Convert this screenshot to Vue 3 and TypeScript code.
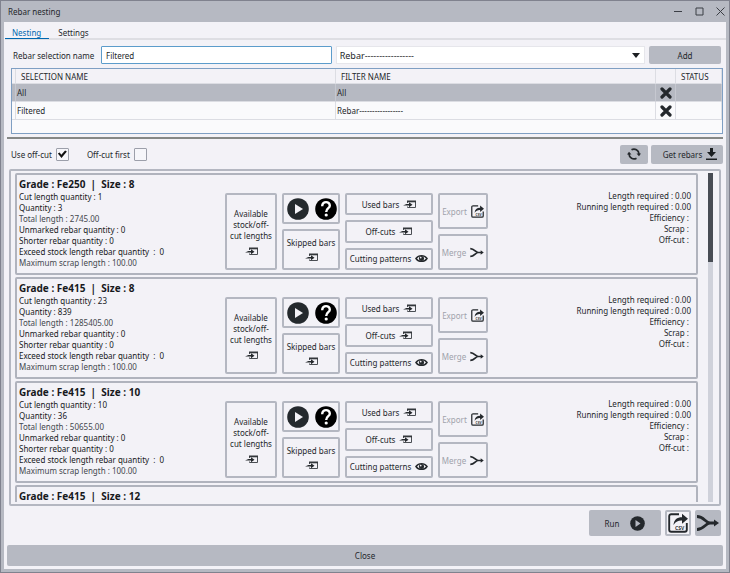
<script setup lang="ts">
import { ref } from 'vue'

interface RebarGroup {
  grade: string
  size: number
  cuts: number
  quantity: number
  total: string
}

const name = ref('Filtered')
const filter = ref('rebar')
const useOffcut = ref(true)
const offcutFirst = ref(false)

const selections = ref([
  { name: 'All', filter: 'All' },
  { name: 'Filtered', filter: 'Rebar-----------------' },
])
const selected = ref(0)

const groups: RebarGroup[] = [
  { grade: 'Fe250', size: 8, cuts: 1, quantity: 3, total: '2745.00' },
  { grade: 'Fe415', size: 8, cuts: 23, quantity: 839, total: '1285405.00' },
  { grade: 'Fe415', size: 10, cuts: 10, quantity: 36, total: '50655.00' },
]
</script>

<template>
  <svg class="defs" aria-hidden="true">
    <symbol id="i-open" viewBox="0 0 13 9">
      <path d="M4.500 3V1.500h8v6h-8V6.500" fill="none" stroke="#4a4e53" stroke-width="1" />
      <path d="M4 .5h9v1.800H4z" fill="#33373b" />
      <path d="M0 5.600 3.500 4H6V2.300L9.500 4.800 6 7.300V5.600z" fill="#24282c" />
    </symbol>
    <symbol id="i-eye" viewBox="0 0 14 9">
      <path d="M1 4.500C4 .3 10 .3 13 4.500 10 8.700 4 8.700 1 4.500z" fill="none" stroke="#24282c" stroke-width="1.500" />
      <circle cx="7" cy="4.500" r="2.700" fill="#24282c" />
      <circle cx="6.200" cy="3.500" r=".9" fill="#f3f2f7" />
    </symbol>
    <symbol id="i-merge" viewBox="0 0 22 18">
      <path d="M0 2.500C7 2.500 8.500 9 13 9 8.500 9 7 15.500 0 15.500M12 9h7" fill="none" stroke="#24282c" stroke-width="2.800" />
      <path d="M17 5.500l5 3.500-5 3.500z" fill="#24282c" />
    </symbol>
    <symbol id="i-play" viewBox="0 0 22 22">
      <circle cx="11" cy="11" r="10.800" fill="#24292d" />
      <path d="M8 6 16 11 8 16z" fill="#f3f2f7" />
    </symbol>
    <symbol id="i-help" viewBox="0 0 22 22">
      <circle cx="11" cy="11" r="10.800" fill="#000" />
      <path d="M7.200 8.200C7 2.800 15 2.800 14.800 7.800 14.700 10.300 11.200 10.300 11.200 14" fill="none" stroke="#fff" stroke-width="2.400" />
      <circle cx="11.200" cy="17" r="1.600" fill="#fff" />
    </symbol>
    <symbol id="i-share" viewBox="0 0 20 20">
      <path d="M11 1.200H3.200a2 2 0 0 0-2 2v13.600a2 2 0 0 0 2 2h13.600a2 2 0 0 0 2-2V10" fill="none" stroke="#24282c" stroke-width="1.900" />
      <path d="M5.500 12C6 6.500 9 4.200 14 4.200V.8l6 5-6 5V7.600C10.500 7.400 8 8.500 5.500 12z" fill="#24282c" />
    </symbol>
    <symbol id="i-cross" viewBox="0 0 12 12">
      <path d="M2 2l8 8M10 2l-8 8" stroke="#24282c" stroke-width="3.200" stroke-linecap="round" />
    </symbol>
  </svg>

  <main class="window">
    <header class="titlebar">
      <h1>Rebar nesting</h1>
      <div class="controls">
        <button aria-label="Minimize"><svg width="9" height="9"><path d="M0 4.500h8" /></svg></button>
        <button aria-label="Maximize"><svg width="9" height="9"><path d="M1 1h7v7H1z" /></svg></button>
        <button aria-label="Close window"><svg width="9" height="9"><path d="M.5.5l8 8M8.500.5l-8 8" /></svg></button>
      </div>
    </header>

    <div class="body">
      <nav class="tabs">
        <a href="#nesting" class="active">Nesting</a>
        <a href="#settings">Settings</a>
      </nav>

      <form class="selector" @submit.prevent>
        <label for="sel-name">Rebar selection name</label>
        <input id="sel-name" v-model="name" class="name" type="text" />
        <div class="combo">
          <select v-model="filter" aria-label="Filter">
            <option value="rebar">Rebar-----------------</option>
          </select>
          <svg width="8" height="5"><path d="M0 0h8L4 5z" fill="#1c1f22" /></svg>
        </div>
        <button class="solid add">Add</button>
      </form>

      <div class="grid">
        <table>
          <colgroup>
            <col class="c-mark" /><col /><col /><col class="c-del" /><col class="c-status" />
          </colgroup>
          <thead>
            <tr><th></th><th>SELECTION NAME</th><th>FILTER NAME</th><th></th><th>STATUS</th></tr>
          </thead>
          <tbody>
            <tr v-for="(s, i) in selections" :key="s.name" :class="{ picked: i === selected }" @click="selected = i">
              <td></td>
              <td>{{ s.name }}</td>
              <td>{{ s.filter }}</td>
              <td><button class="bare" aria-label="Delete"><svg width="12" height="12"><use href="#i-cross" /></svg></button></td>
              <td></td>
            </tr>
          </tbody>
        </table>
      </div>

      <hr />

      <div class="options">
        <label>Use off-cut <input v-model="useOffcut" type="checkbox" /></label>
        <label>Off-cut first <input v-model="offcutFirst" type="checkbox" /></label>
        <button class="solid refresh" aria-label="Refresh">
          <svg width="14" height="12" viewBox="0 0 14 12">
            <path d="M4.500 1.800A5 5 0 0 1 12 6M9.500 10.200A5 5 0 0 1 2 6" fill="none" stroke="#24282c" stroke-width="1.700" />
            <path d="M9.500 5.500H14L12 8.300zM0 6.500h4.500L2 3.700z" fill="#24282c" />
          </svg>
        </button>
        <button class="solid get">
          Get rebars
          <svg width="11" height="12" viewBox="0 0 11 12"><path d="M4 0h3v4h3L5.500 9 1 4h3zM0 10.500h11V12H0z" fill="#1c1f22" /></svg>
        </button>
      </div>

      <section class="frame">
        <div class="list">
          <article v-for="g in groups" :key="g.grade + g.size" class="card">
            <div class="info">
              <h2>Grade : {{ g.grade }}&nbsp; |&nbsp; Size : {{ g.size }}</h2>
              <p>Cut length quantity : {{ g.cuts }}</p>
              <p>Quantity : {{ g.quantity }}</p>
              <p class="soft">Total length : {{ g.total }}</p>
              <p>Unmarked rebar quantity : 0</p>
              <p>Shorter rebar quantity : 0</p>
              <p>Exceed stock length rebar quantity&nbsp; :&nbsp; 0</p>
              <p class="soft">Maximum scrap length : 100.00</p>
            </div>
            <div class="actions">
              <button class="line tall">
                <span>Available<br />stock/off-<br />cut lengths</span>
                <svg width="13" height="9"><use href="#i-open" /></svg>
              </button>
              <div class="stack mid">
                <div class="line pair">
                  <button class="bare" aria-label="Run"><svg width="22" height="22"><use href="#i-play" /></svg></button>
                  <button class="bare" aria-label="Help"><svg width="22" height="22"><use href="#i-help" /></svg></button>
                </div>
                <button class="line skipped">
                  <span>Skipped bars</span>
                  <svg width="13" height="9"><use href="#i-open" /></svg>
                </button>
              </div>
              <div class="stack wide">
                <button class="line">Used bars <svg width="13" height="9"><use href="#i-open" /></svg></button>
                <button class="line">Off-cuts <svg width="13" height="9"><use href="#i-open" /></svg></button>
                <button class="line">Cutting patterns <svg width="13" height="9"><use href="#i-eye" /></svg></button>
              </div>
              <div class="stack side">
                <button class="line" disabled>
                  Export
                  <svg width="13" height="13" viewBox="0 0 20 20"><use href="#i-share" /><text class="csv-text" x="7" y="16.500">CSV</text></svg>
                </button>
                <button class="line" disabled>Merge <svg width="14" height="11"><use href="#i-merge" /></svg></button>
              </div>
            </div>
            <div class="totals">
              <p>Length required : 0.00</p>
              <p>Running length required : 0.00</p>
              <p>Efficiency :&nbsp;</p>
              <p>Scrap :&nbsp;</p>
              <p>Off-cut :&nbsp;</p>
            </div>
          </article>
          <article class="card">
            <div class="info">
              <h2>Grade : Fe415&nbsp; |&nbsp; Size : 12</h2>
            </div>
          </article>
        </div>
        <div class="track"><div class="thumb"></div></div>
      </section>

      <div class="footer">
        <button class="solid run">Run <svg width="15" height="15" viewBox="0 0 15 15"><circle cx="7.500" cy="7.500" r="7.300" fill="#24282c" /><path d="M5.500 4 10.500 7.500l-5 3.500z" fill="#b6b9c2" /></svg></button>
        <button class="solid csv" aria-label="Export CSV">
          <svg width="20" height="20" viewBox="0 0 20 20"><use href="#i-share" /><text class="csv-text" x="7" y="16.500">CSV</text></svg>
        </button>
        <button class="solid mrg" aria-label="Merge"><svg width="22" height="18"><use href="#i-merge" /></svg></button>
      </div>

      <button class="solid close">Close</button>
    </div>
  </main>
</template>

<style>
body {
  margin: 0;
}
</style>

<style scoped>
* {
  box-sizing: border-box;
}
.defs {
  position: absolute;
  width: 0;
  height: 0;
}
.window {
  height: 100vh;
  display: flex;
  flex-direction: column;
  border: 1px solid #80828e;
  background: #b6b9c2;
  padding: 0 3px 3px;
  font-family: "Noto Sans", "Open Sans", sans-serif;
  font-size: 8px;
  line-height: 11px;
  color: #24272b;
}
button,
input,
select {
  font: inherit;
  color: inherit;
  margin: 0;
}
button {
  display: flex;
  align-items: center;
  justify-content: center;
  padding: 0;
  border: 0;
  white-space: nowrap;
}
svg {
  flex: none;
  display: block;
}
h1,
h2,
p {
  margin: 0;
}
.titlebar {
  height: 21px;
  flex: none;
  display: flex;
  align-items: center;
  justify-content: space-between;
  padding: 0 1px 0 4px;
}
h1 {
  font-size: 8px;
  font-weight: 400;
}
.controls {
  display: flex;
  gap: 12px;
}
.controls button {
  background: none;
}
.controls path {
  fill: none;
  stroke: #3b3e45;
  stroke-width: 1;
}
.body {
  flex: 1;
  min-height: 0;
  display: flex;
  flex-direction: column;
  background: #f3f2f7;
  padding: 0 3px 3px;
}
.tabs {
  display: flex;
  height: 18px;
  flex: none;
  margin: 0 -3px 0 -2px;
  border-bottom: 2px solid #dedee3;
}
.tabs a {
  height: 17px;
  padding: 5px 8px 0 9px;
  color: inherit;
  text-decoration: none;
}
.tabs .active {
  color: #0068b0;
  padding: 5px 8px 0 7px;
  border-bottom: 1px solid #0068b0;
}
.selector {
  display: flex;
  align-items: center;
  height: 18px;
  flex: none;
  margin: 6px 2px 0 6px;
}
.selector label {
  width: 88px;
  white-space: nowrap;
}
.name {
  flex: 227;
  min-width: 0;
  height: 18px;
  border: 1px solid #5c9ccb;
  border-radius: 1px;
  background: #fff;
  padding: 0 4px;
  outline: 0;
}
.combo {
  flex: 312;
  min-width: 0;
  height: 18px;
  display: flex;
  align-items: center;
  margin: 0 4px;
  padding-right: 4px;
  background: #fff;
  border: 1px solid #e6e6eb;
}
.combo select {
  flex: 1;
  min-width: 0;
  appearance: none;
  border: 0;
  background: none;
  padding: 0 3px;
  outline: 0;
  font-size: 9px;
}
.solid {
  background: #b6b9c2;
  border-radius: 2px;
}
.add {
  width: 72px;
  height: 18px;
}
.grid {
  height: 66px;
  flex: none;
  margin: 4px 0 0 4px;
  border: 1px solid #7f9fc3;
  background: #fafafc;
}
table {
  width: 100%;
  table-layout: fixed;
  border-collapse: separate;
  border-spacing: 0;
}
.c-mark {
  width: 4px;
}
.c-del {
  width: 20px;
}
.c-status {
  width: 46px;
}
th,
td {
  padding: 0 1px;
  text-align: left;
  font-weight: 400;
  border-right: 1px solid #dcdde3;
  border-bottom: 1px solid #dcdde3;
}
th {
  height: 15px;
  padding-left: 5px;
  background: #f3f2f7;
}
td {
  height: 18px;
}
td:first-child,
th:first-child {
  padding: 0;
}
td button {
  margin: 0 auto;
}
.picked td {
  background: #b6b9c2;
  border-right-color: #c6c8d0;
}
.bare {
  background: none;
}
hr {
  width: 100%;
  height: 2px;
  flex: none;
  margin: 3px 0 0;
  border: 0;
  background: #868886;
}
.options {
  display: flex;
  align-items: center;
  height: 20px;
  flex: none;
  margin: 5px 0 0 4px;
}
.options label {
  display: flex;
  align-items: center;
  gap: 4px;
  margin-right: 18px;
  white-space: nowrap;
}
input[type="checkbox"] {
  appearance: none;
  width: 13px;
  height: 13px;
  border: 1px solid #9c9faa;
  border-radius: 1px;
  background: #f6f6fa;
  display: grid;
  place-items: center;
}
input[type="checkbox"]:checked::before {
  content: "";
  width: 9px;
  height: 8px;
  background: #111;
  clip-path: polygon(0 45%, 20% 30%, 38% 58%, 80% 5%, 100% 18%, 40% 100%);
}
.refresh {
  width: 28px;
  height: 19px;
  margin-left: auto;
}
.get {
  width: 72px;
  height: 19px;
  margin-left: 3px;
  gap: 4px;
  padding-left: 6px;
}
.frame {
  flex: 1;
  min-height: 0;
  display: flex;
  justify-content: space-between;
  margin: 5px 2px 0;
  padding: 2px 6px 2px 4px;
  border: 2px solid #b4b7c1;
  border-radius: 2px;
}
.list {
  flex: 1;
  min-width: 0;
  display: flex;
  flex-direction: column;
  gap: 2px;
  overflow: hidden;
}
.card {
  flex: none;
  display: flex;
  height: 102px;
  border: 2px solid #b0b3bd;
  border-radius: 2px;
}
.info {
  width: 208px;
  padding: 3px 0 0 2px;
  color: #17191c;
  white-space: nowrap;
}
.soft {
  color: #44484e;
}
h2 {
  font-size: 10px;
  line-height: 13px;
}
.actions {
  display: flex;
  gap: 5px;
  height: 77px;
  margin-top: 18px;
}
.line {
  border: 2px solid #b4b7c1;
  border-radius: 2px;
  background: #f3f2f7;
}
.tall {
  width: 52px;
  flex-direction: column;
  gap: 6px;
}
.stack {
  display: flex;
  flex-direction: column;
  gap: 5px;
}
.stack .line {
  flex: 1;
}
.mid {
  width: 58px;
}
.stack .pair {
  flex: none;
  height: 31px;
  display: flex;
  align-items: center;
  justify-content: space-between;
  padding: 0 1px 0 3px;
}
.skipped {
  flex-direction: column;
  gap: 5px;
}
.wide {
  width: 88px;
}
.wide .line,
.side .line {
  gap: 4px;
}
.side {
  width: 50px;
}
.side .line {
  color: #a0a2ab;
}
.csv-text {
  font-size: 5px;
  font-weight: 700;
  fill: #33373b;
}
.totals {
  flex: 1;
  padding: 15px 5px 0 0;
  text-align: right;
  white-space: nowrap;
}
.track {
  width: 5px;
  margin-left: 10px;
  background: #cfd1da;
}
.thumb {
  height: 27%;
  background: #484c54;
}
.footer {
  display: flex;
  flex: none;
  justify-content: flex-end;
  gap: 4px;
  height: 26px;
  margin: 4px 2px 0;
}
.run {
  width: 72px;
  gap: 11px;
}
.csv,
.mrg {
  width: 26px;
}
.csv {
  background: #f3f2f7;
  border: 2px solid #b6b9c2;
}
.close {
  height: 21px;
  flex: none;
  margin-top: 9px;
}
</style>
